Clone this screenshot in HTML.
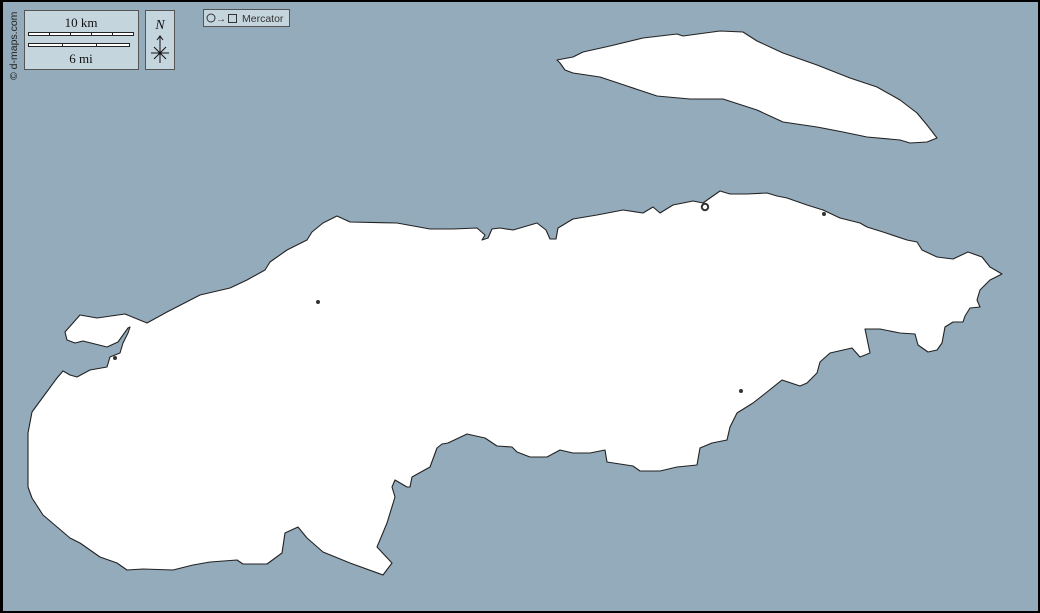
<!DOCTYPE html>
<html><head><meta charset="utf-8"><style>
html,body{margin:0;padding:0;}
body{width:1040px;height:613px;overflow:hidden;background:#94abbb;}
svg{display:block;}
</style></head><body>
<svg width="1040" height="613" viewBox="0 0 1040 613" xmlns="http://www.w3.org/2000/svg">
<rect x="0" y="0" width="1040" height="613" fill="#94abbb"/>
<g fill="#fff" stroke="#222" stroke-width="1.1" stroke-linejoin="round">
<path d="M557,60 L573,57 L583,52 L610,46 L643,38 L677,34 L683,36 L720,31 L743,32 L757,41 L783,53 L817,65 L850,78 L877,87 L900,100 L917,113 L927,125 L937,138 L927,142 L910,143 L900,140 L867,137 L843,132 L817,127 L783,122 L757,110 L723,99 L690,99 L657,96 L627,86 L600,77 L573,73 L565,70 L560,63 Z"/>
<path d="M147,323 L167,312 L200,295 L230,288 L247,280 L265,270 L270,262 L287,250 L307,240 L312,232 L323,223 L337,216 L350,222 L397,223 L430,229 L453,229 L477,228 L485,235 L482,240 L488,238 L492,229 L500,228 L513,230 L537,223 L546,230 L550,239 L556,239 L558,228 L573,219 L597,215 L623,210 L643,213 L653,207 L660,213 L673,205 L693,201 L703,203 L710,198 L720,191 L730,194 L747,194 L767,193 L777,196 L787,198 L807,205 L823,210 L840,218 L860,223 L867,227 L883,232 L907,240 L917,242 L922,250 L937,257 L953,259 L968,252 L982,257 L990,267 L1002,274 L990,280 L980,290 L977,300 L980,307 L970,308 L965,316 L963,322 L953,322 L945,327 L942,343 L937,350 L928,352 L918,345 L915,334 L900,333 L880,329 L865,329 L870,353 L860,357 L852,348 L830,353 L820,362 L817,373 L807,383 L800,386 L782,380 L767,392 L753,403 L737,413 L730,427 L727,440 L712,443 L700,448 L697,465 L677,467 L660,471 L640,471 L633,466 L607,462 L605,450 L590,453 L573,453 L560,450 L547,457 L530,457 L517,452 L512,447 L497,446 L485,438 L467,434 L448,443 L442,444 L437,448 L430,467 L412,477 L410,487 L407,487 L395,480 L392,487 L395,497 L387,523 L377,547 L392,563 L383,575 L350,563 L323,552 L307,538 L298,527 L285,533 L282,553 L267,564 L243,564 L237,560 L210,562 L193,565 L173,570 L143,569 L127,570 L117,563 L100,557 L80,543 L70,538 L43,515 L32,498 L28,487 L28,433 L32,412 L43,397 L57,378 L63,371 L70,375 L77,377 L90,370 L107,367 L110,357 L120,353 L123,343 L128,333 L130,327 L128,328 L118,342 L107,347 L83,341 L75,343 L67,340 L65,332 L80,315 L97,318 L125,314 Z"/>
</g>
<g fill="#333">
<circle cx="318" cy="302" r="2"/>
<circle cx="115" cy="358" r="2"/>
<circle cx="741" cy="391" r="2"/>
<circle cx="824" cy="214" r="2"/>
</g>
<circle cx="705" cy="207" r="3.2" fill="#fff" stroke="#333" stroke-width="2"/>
<rect x="24.5" y="10.5" width="114" height="59" fill="#c5d5de" stroke="#555"/>
<text x="81" y="27" font-family="Liberation Serif" font-size="13" text-anchor="middle" fill="#111">10 km</text>
<rect x="28.5" y="32.5" width="105" height="3" fill="#fff" stroke="#222"/>
<path d="M49.5,32 V36 M70.5,32 V36 M91.5,32 V36 M112.5,32 V36" stroke="#222"/>
<rect x="28.5" y="43.5" width="101" height="3" fill="#fff" stroke="#222"/>
<path d="M62.5,43 V47 M96.5,43 V47" stroke="#222"/>
<text x="81" y="63" font-family="Liberation Serif" font-size="13" text-anchor="middle" fill="#111">6 mi</text>
<rect x="145.5" y="10.5" width="29" height="59" fill="#c5d5de" stroke="#555"/>
<text x="160" y="29" font-family="Liberation Serif" font-size="14" font-style="italic" text-anchor="middle" fill="#111">N</text>
<path d="M160,36 V63 M157,40 L160,36 L163,40 M151,53 H169 M154,47 L166,59 M166,47 L154,59" stroke="#111" stroke-width="1" fill="none"/>
<rect x="203.5" y="9.5" width="86" height="17" fill="#c5d5de" stroke="#555"/>
<circle cx="211" cy="18" r="4" fill="none" stroke="#333"/>
<text x="216" y="22" font-family="Liberation Sans" font-size="10" fill="#333">→</text>
<rect x="228.5" y="14.5" width="8" height="8" fill="none" stroke="#333"/>
<text x="242" y="22" font-family="Liberation Sans" font-size="10.5" fill="#333">Mercator</text>
<text transform="translate(17,80) rotate(-90)" font-family="Liberation Sans" font-size="10.5" fill="#222">© d-maps.com</text>
<rect x="1" y="1" width="1038" height="611" fill="none" stroke="#000" stroke-width="2"/>
<rect x="0" y="0" width="3" height="613" fill="#000"/>
</svg>
</body></html>
